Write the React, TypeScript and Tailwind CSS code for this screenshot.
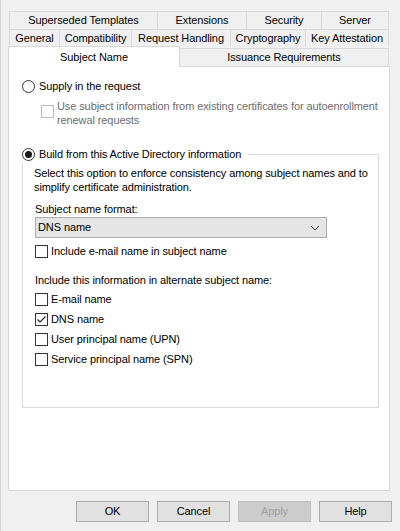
import React from "react";

const F = "font-['Liberation_Sans',Arial,sans-serif]";

function Tab({ label, className = "" }: { label: string; className?: string }) {
  return (
    <div
      className={`flex items-center justify-center whitespace-nowrap border-l border-t border-[#d9d9d9] bg-[#f0f0f0] h-[18px] leading-none text-black ${className}`}
    >
      {label}
    </div>
  );
}

function Check({ checked = false, disabled = false }: { checked?: boolean; disabled?: boolean }) {
  return (
    <div
      className={`w-[13px] h-[13px] shrink-0 border bg-white flex items-center justify-center ${
        disabled ? "border-[#bcbcbc]" : "border-[#333333]"
      }`}
    >
      {checked && (
        <svg width="11" height="11" viewBox="0 0 11 11">
          <path d="M1.5 5.5 L4 8 L9.5 2.5" fill="none" stroke="#222" strokeWidth="1.1" />
        </svg>
      )}
    </div>
  );
}

function Radio({ checked = false }: { checked?: boolean }) {
  return (
    <div className="w-[13px] h-[13px] shrink-0 rounded-full border border-[#333333] bg-white flex items-center justify-center">
      {checked && <div className="w-[7px] h-[7px] rounded-full bg-[#1a1a1a]" />}
    </div>
  );
}

function CheckRow({ label, checked = false }: { label: string; checked?: boolean }) {
  return (
    <div className="flex items-center gap-[3px] h-[20px] ml-[1px]">
      <Check checked={checked} />
      <span>{label}</span>
    </div>
  );
}

function Button({ label, disabled = false }: { label: string; disabled?: boolean }) {
  return (
    <div
      className={`w-[73px] h-[21px] flex items-center justify-center border ${
        disabled
          ? "bg-[#cccccc] border-[#bfbfbf] text-[#a0a0a0]"
          : "bg-[#e1e1e1] border-[#adadad] text-black"
      }`}
    >
      {label}
    </div>
  );
}

export default function App() {
  return (
    <div
      className={`w-[400px] h-[531px] bg-[#f0f0f0] border-l border-[#d4d4d4] pl-[7px] pt-[11px] ${F} text-[11px] tracking-[-0.1px] text-black whitespace-nowrap`}
    >
      <div className="w-[382px]">
        {/* tab rows */}
        <div className="ml-[1px] w-[380px] flex">
          <Tab label="Superseded Templates" className="w-[148px]" />
          <Tab label="Extensions" className="w-[89px]" />
          <Tab label="Security" className="w-[75px]" />
          <Tab label="Server" className="w-[68px] border-r" />
        </div>
        <div className="ml-[1px] w-[380px] flex">
          <Tab label="General" className="w-[50px]" />
          <Tab label="Compatibility" className="w-[72px]" />
          <Tab label="Request Handling" className="w-[99px]" />
          <Tab label="Cryptography" className="w-[75px]" />
          <Tab label="Key Attestation" className="w-[84px] border-r" />
        </div>
        <div className="flex items-end h-[19px]">
          <div className="relative z-10 -mb-px w-[172px] h-[21px] bg-white border-l border-t border-r border-[#d9d9d9] flex items-center justify-center">
            Subject Name
          </div>
          <Tab label="Issuance Requirements" className="w-[209px] border-r border-l-0" />
        </div>

        {/* panel */}
        <div className="h-[425px] bg-white border border-[#d9d9d9] pl-[13px] pt-[11px]">
          <div className="flex items-center gap-[4px] h-[16px]">
            <Radio />
            <span>Supply in the request</span>
          </div>
          <div className="ml-[19px] mt-[5px] flex items-start gap-[3px]">
            <div className="mt-[6px]">
              <Check disabled />
            </div>
            <div className="leading-[14px] text-[#6d6d6d]">
              Use subject information from existing certificates for autoenrollment
              <br />
              renewal requests
            </div>
          </div>

          <div className="relative mt-[27px] w-[357px] h-[254px] border border-[#dcdcdc] pl-[11px] pt-[11px]">
            <div className="absolute left-[-1px] top-[-9px] h-[16px] bg-white pr-[7px] flex items-center gap-[4px]">
              <Radio checked />
              <span>Build from this Active Directory information</span>
            </div>
            <div className="leading-[14px]">
              Select this option to enforce consistency among subject names and to
              <br />
              simplify certificate administration.
            </div>
            <div className="mt-[8px] leading-[14px] ml-[1px]">Subject name format:</div>
            <div className="mt-[1px] ml-[1px] w-[292px] h-[21px] bg-[#e5e5e5] border border-[#adadad] flex items-center justify-between pl-[2px] pr-[6px]">
              <span>DNS name</span>
              <svg width="10" height="6" viewBox="0 0 10 6">
                <path d="M1 1 L5 5 L9 1" fill="none" stroke="#333" strokeWidth="1" />
              </svg>
            </div>
            <div className="mt-[5px] h-[16px] ml-[1px] flex items-center gap-[3px]">
              <Check />
              <span>Include e-mail name in subject name</span>
            </div>
            <div className="mt-[14px] leading-[14px] ml-[1px]">
              Include this information in alternate subject name:
            </div>
            <div className="mt-[2px]">
              <CheckRow label="E-mail name" />
              <CheckRow label="DNS name" checked />
              <CheckRow label="User principal name (UPN)" />
              <CheckRow label="Service principal name (SPN)" />
            </div>
          </div>
        </div>
      </div>

      {/* buttons */}
      <div className="mt-[10px] flex justify-end gap-[8px] pr-[8px]">
        <Button label="OK" />
        <Button label="Cancel" />
        <Button label="Apply" disabled />
        <Button label="Help" />
      </div>
    </div>
  );
}
